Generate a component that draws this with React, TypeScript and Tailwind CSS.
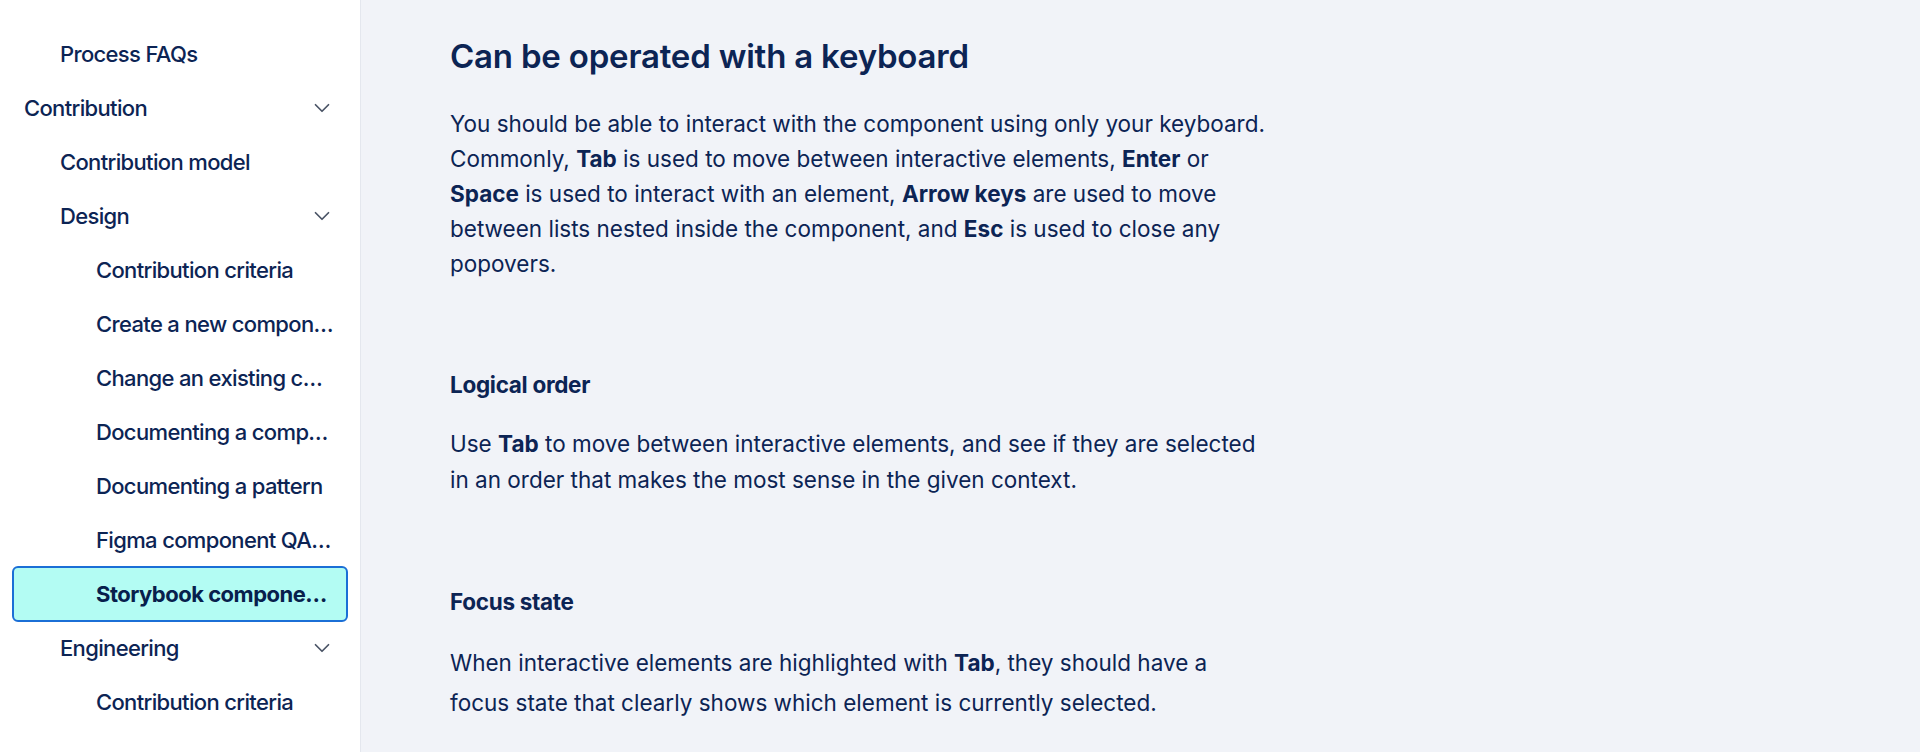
import { ChevronDown } from "lucide-react";

type NavItem = {
  label: string;
  level: 0 | 1 | 2;
  expandable?: boolean;
  active?: boolean;
};

const navItems: NavItem[] = [
  { label: "Process FAQs", level: 1 },
  { label: "Contribution", level: 0, expandable: true },
  { label: "Contribution model", level: 1 },
  { label: "Design", level: 1, expandable: true },
  { label: "Contribution criteria", level: 2 },
  { label: "Create a new component", level: 2 },
  { label: "Change an existing component", level: 2 },
  { label: "Documenting a component", level: 2 },
  { label: "Documenting a pattern", level: 2 },
  { label: "Figma component QA checklist", level: 2 },
  { label: "Storybook component QA checklist", level: 2, active: true },
  { label: "Engineering", level: 1, expandable: true },
  { label: "Contribution criteria", level: 2 },
];

const indent = {
  0: "pl-[12px]",
  1: "pl-[48px]",
  2: "pl-[84px]",
};

// the active row has a 2px border, so its padding is 2px less
const activeIndent = {
  0: "pl-[10px]",
  1: "pl-[46px]",
  2: "pl-[82px]",
};

function SidebarItem({ item }: { item: NavItem }) {
  if (item.active) {
    return (
      <div
        className={`-my-px flex h-[56px] items-center rounded-[6px] border-2 border-[#1b6fd6] bg-[#b3fcf3] pr-[14px] ${activeIndent[item.level]}`}
      >
        <span className="min-w-0 flex-1 truncate font-bold tracking-[-0.5px] text-[#07204c]">
          {item.label}
        </span>
      </div>
    );
  }
  return (
    <div className={`flex h-[54px] items-center pr-[13px] ${indent[item.level]}`}>
      <span className="min-w-0 flex-1 truncate">{item.label}</span>
      {item.expandable && (
        <ChevronDown size={26} strokeWidth={1.6} className="shrink-0 text-[#4a5466]" />
      )}
    </div>
  );
}

function Sidebar() {
  return (
    <aside className="w-[361px] shrink-0 border-r border-[#e4e7ee] bg-white pt-[27px]">
      <nav className="flex flex-col px-[12px] text-[22px] font-medium tracking-[-0.65px] text-[#0c2454]">
        {navItems.map((item, i) => (
          <SidebarItem key={i} item={item} />
        ))}
      </nav>
    </aside>
  );
}

function Key({ children }: { children: React.ReactNode }) {
  return <strong className="font-bold">{children}</strong>;
}

export default function App() {
  return (
    <div
      className="flex h-[752px] w-full overflow-hidden bg-[#f1f3f8] text-[#0c2454]"
      style={{ fontFamily: "Inter, 'Noto Sans', sans-serif" }}
    >
      <Sidebar />
      <main className="flex-1 pl-[89px] pt-[36px]">
        <div className="max-w-[818px]">
          <h2 className="text-[33px] font-semibold leading-[40px] tracking-[-0.2px]">
            Can be operated with a keyboard
          </h2>
          <p className="mt-[30px] text-[22.5px] leading-[35px]">
            You should be able to interact with the component using only your keyboard.
            Commonly, <Key>Tab</Key> is used to move between interactive elements, <Key>Enter</Key> or{" "}
            <Key>Space</Key> is used to interact with an element, <Key>Arrow keys</Key> are used to move
            between lists nested inside the component, and <Key>Esc</Key> is used to close any popovers.
          </p>

          <h3 className="mt-[86px] text-[22.5px] font-bold leading-[35px] tracking-[-0.3px]">
            Logical order
          </h3>
          <p className="mt-[24px] text-[22.5px] leading-[36px]">
            Use <Key>Tab</Key> to move between interactive elements, and see if they are selected in an
            order that makes the most sense in the given context.
          </p>

          <h3 className="mt-[86px] text-[22.5px] font-bold leading-[35px] tracking-[-0.3px]">
            Focus state
          </h3>
          <p className="mt-[24px] text-[22.5px] leading-[40px]">
            When interactive elements are highlighted with <Key>Tab</Key>, they should have a focus
            state that clearly shows which element is currently selected.
          </p>
        </div>
      </main>
    </div>
  );
}
